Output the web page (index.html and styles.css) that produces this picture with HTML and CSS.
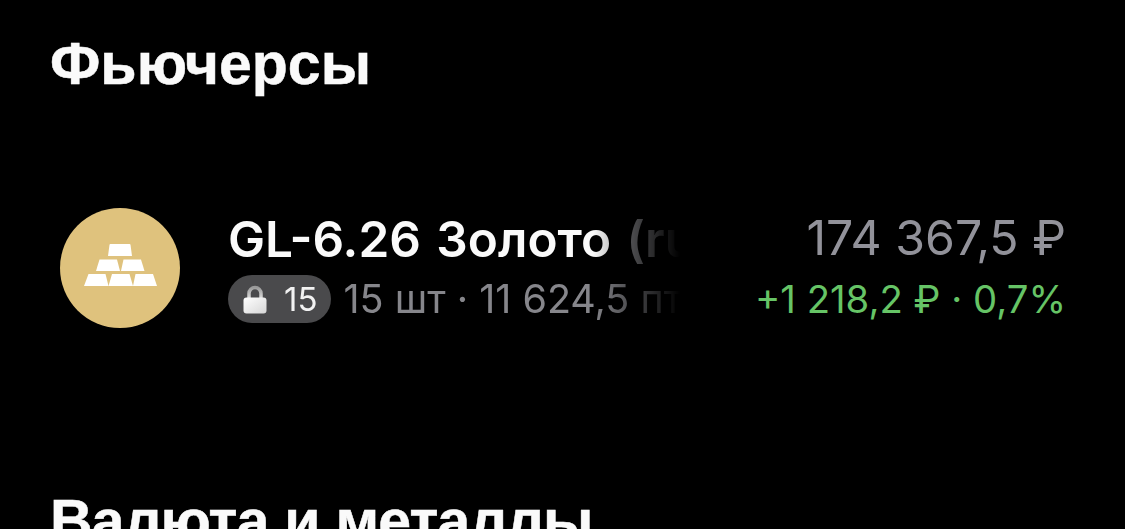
FILE: index.html
```html
<!DOCTYPE html>
<html lang="ru">
<head>
<meta charset="utf-8">
<title>Фьючерсы</title>
<link rel="stylesheet" href="styles.css">
</head>
<body>
<main class="page">
  <h2 class="section-title">Фьючерсы</h2>
  <div class="row">
    <div class="avatar">
      <svg class="bars" viewBox="0 0 73 42" width="73" height="42" aria-hidden="true">
        <path d="M26.500 0h19a1 1 0 0 1 1 .8L48 12H24l1.500-11.200a1 1 0 0 1 1-.8z"/>
        <path d="M15.500 15.500h17.500L36 27H12z"/>
        <path d="M39.500 15.500H57L60.500 27H37z"/>
        <path d="M4.500 30H21.500L24.500 42H0z"/>
        <path d="M28 30h17.500L49 42H24.500z"/>
        <path d="M51.500 30H69L73 42H49z"/>
      </svg>
    </div>
    <div class="info">
      <div class="name">GL-6.26 Золото <span class="ticker">(rub)</span></div>
      <div class="meta">
        <span class="badge">
          <svg class="lock" viewBox="0 0 24 29" width="24" height="29" aria-hidden="true">
            <defs>
              <linearGradient id="lockShackle" x1="0" y1="0" x2="0" y2="1">
                <stop offset="0" stop-color="#9a9a9a"/>
                <stop offset="1" stop-color="#e0e0e0"/>
              </linearGradient>
              <linearGradient id="lockBody" x1="0" y1="0" x2="1" y2="1">
                <stop offset="0" stop-color="#ffffff"/>
                <stop offset="1" stop-color="#d6d6d6"/>
              </linearGradient>
            </defs>
            <path class="shackle" d="M6 14V8.500a6 6 0 0 1 12 0V14"/>
            <rect class="body" x="0.500" y="12.500" width="23" height="16" rx="3"/>
          </svg>
          <span>15</span>
        </span>
        <span class="qty">15 шт · 11 624,5 пт</span>
      </div>
    </div>
    <div class="values">
      <div class="price">174 367,5 ₽</div>
      <div class="change">+1 218,2 ₽ · 0,7%</div>
    </div>
  </div>
  <h2 class="section-title next">Валюта и металлы</h2>
</main>
</body>
</html>
```
FILE: styles.css
```css
* { box-sizing: border-box; }
html, body { margin: 0; height: 100%; background: #000; overflow: hidden; }
body { font-family: "Inter", "Liberation Sans", sans-serif; color: #fff; }
.page { width: 1125px; height: 529px; padding: 32px 59px 0 50px; overflow: hidden; }
.section-title {
  margin: 0;
  font-family: "Liberation Sans", sans-serif;
  font-size: 59px;
  line-height: 64px;
  font-weight: 700;
  color: #fafafa;
  -webkit-text-stroke: 0.5px #fafafa;
}
.section-title.next { margin-top: 161px; letter-spacing: -0.8px; }
.row { display: flex; align-items: flex-start; margin-top: 112px; padding-left: 10px; }
.avatar {
  flex: none;
  width: 120px;
  height: 120px;
  border-radius: 50%;
  background: #dfc27d;
  display: flex;
  align-items: center;
  justify-content: center;
}
.bars { fill: #fff; margin-bottom: 6px; }
.info {
  flex: none;
  width: 452px;
  margin-left: 48px;
  padding-top: 1px;
  overflow: hidden;
  white-space: nowrap;
  -webkit-mask-image: linear-gradient(to right, #000 365px, transparent 452px);
  mask-image: linear-gradient(to right, #000 365px, transparent 452px);
}
.name { font-size: 49.5px; line-height: 60px; font-weight: 600; color: #fafafa; word-spacing: 3px; }
.ticker { color: #8a8a8e; }
.meta { display: flex; align-items: center; gap: 12px; margin-top: 6px; }
.badge {
  flex: none;
  height: 48px;
  padding: 0 14px 0 15px;
  border-radius: 24px;
  background: #4a4a4c;
  display: flex;
  align-items: center;
  gap: 17px;
  font-size: 33px;
  color: #f2f2f2;
}
.lock .shackle { fill: none; stroke: url(#lockShackle); stroke-width: 3.5; }
.lock .body { fill: url(#lockBody); }
.qty { font-size: 39.5px; line-height: 48px; color: #86868b; }
.values { flex: 1; text-align: right; white-space: nowrap; }
.price { font-size: 48.2px; line-height: 60px; color: #92929a; }
.change { font-size: 38.3px; line-height: 48px; margin-top: 7px; color: #66c466; }
```
